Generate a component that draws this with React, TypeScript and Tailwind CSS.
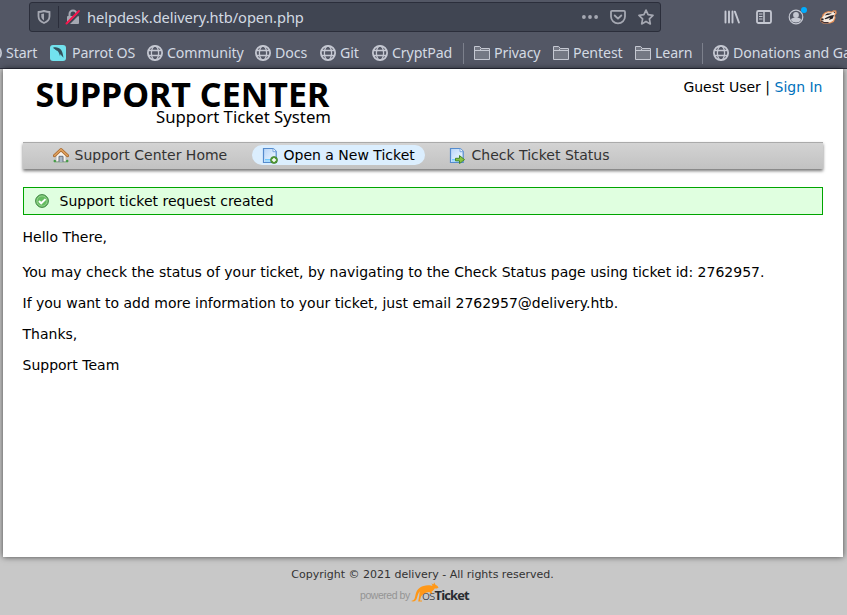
import React from "react";

const chrome = "font-['Noto_Sans','Open_Sans',sans-serif]";

function Globe() {
  return (
    <svg width="16" height="16" viewBox="0 0 16 16" fill="none" stroke="#c5c8d2" strokeWidth="1.3">
      <circle cx="8" cy="8" r="7.1" strokeWidth="1.8" />
      <ellipse cx="8" cy="8" rx="3.6" ry="7" />
      <path d="M1.5 5.5h13M1.5 10.5h13" />
    </svg>
  );
}

function Folder() {
  return (
    <svg width="16" height="16" viewBox="0 0 16 16" fill="#747884" stroke="#c5c8d2" strokeWidth="1">
      <path d="M.5 14.5v-13h5.2l1.600 2h8.200v11z" />
      <path d="M.5 5.500h5.200l1.600-2" fill="none" />
      <path d="M1 5.500h14.500" fill="none" />
    </svg>
  );
}

function Parrot() {
  return (
    <svg width="16" height="16" viewBox="0 0 16 16">
      <rect width="16" height="16" rx="3" fill="#72e2ee" />
      <path d="M3 2.800C5.500 1.800 9.200 2.500 11.200 5c1.500 2 1.600 4.800 2.300 7.800-1.300-1.500-2.400-2.400-3.100-3.800l-.4 2.200C9.300 8.500 8.600 6.600 7 5.500l-.5.500-.3-1.200-1 .3V4.200c-.8-.2-1.500-.7-2.200-1.400z" fill="#33515c" />
    </svg>
  );
}

function Bookmark({ icon, label, width }: { icon: React.ReactNode; label: string; width: string }) {
  return (
    <div className={`flex shrink-0 items-center ${width}`}>
      <span className="mr-1 shrink-0">{icon}</span>
      <span className="whitespace-nowrap">{label}</span>
    </div>
  );
}

function AddressBar() {
  return (
    <div className="ml-[29px] flex h-[30px] w-[632px] shrink-0 items-center rounded-[3px] border border-[#2b2e3b] bg-[#404552]">
      <svg className="ml-[7px]" width="14" height="14" viewBox="0 0 14 14" fill="none">
        <path d="M7 1C5.300 1.400 3.500 1.800 1.500 2v4.200c0 3.200 1.900 5.400 5.500 6.800 3.600-1.400 5.500-3.600 5.500-6.800V2C10.500 1.800 8.700 1.400 7 1z" stroke="#a5a8b2" strokeWidth="1.800" />
        <path d="M7 3.600v6.800C5 9.300 4.300 8 4.300 6.200V4.100z" fill="#a5a8b2" />
      </svg>
      <div className="ml-[7px] h-[22px] w-px bg-[#2b2e3b]" />
      <svg className="ml-[6px]" width="16" height="16" viewBox="0 0 16 16" fill="none">
        <path d="M4.500 8V5a3.500 3.500 0 0 1 7 0v3" stroke="#a5a8b2" strokeWidth="2" />
        <rect x="2" y="7" width="12" height="8" rx="1" fill="#a5a8b2" />
        <path d="M2.800 15.800L15.300 3.300" stroke="#404552" strokeWidth="2" />
        <path d="M1.500 14.500L14 2" stroke="#f5154b" strokeWidth="2" strokeLinecap="round" />
      </svg>
      <span className="ml-[6px] w-[490px] whitespace-nowrap text-[14.67px] leading-[20px] tracking-[-0.06px] text-[#d3dae3]">
        helpdesk.delivery.htb/open.php
      </span>
      <svg className="ml-[5px] shrink-0" width="16" height="16" viewBox="0 0 16 16" fill="#a5a8b2">
        <circle cx="1.900" cy="8" r="1.900" />
        <circle cx="8" cy="8" r="1.900" />
        <circle cx="14.100" cy="8" r="1.900" />
      </svg>
      <svg className="ml-[12px] shrink-0" width="16" height="16" viewBox="0 0 16 16" fill="none" stroke="#a5a8b2" strokeWidth="1.800" strokeLinecap="round" strokeLinejoin="round">
        <path d="M2 1.900h12a1 1 0 0 1 1 1V7.500a7 6.800 0 0 1-14 0V2.900a1 1 0 0 1 1-1z" />
        <path d="M4.700 6.500L8 9.700l3.300-3.200" />
      </svg>
      <svg className="ml-[12px] shrink-0" width="16" height="16" viewBox="0 0 16 16" fill="none" stroke="#a5a8b2" strokeWidth="1.700" strokeLinejoin="round">
        <path d="M8 1.100l2.100 4.600 4.900.7-3.600 3.500.9 5L8 12.400l-4.300 2.500.9-5L1 6.400l4.900-.7z" />
      </svg>
    </div>
  );
}

function ToolbarIcons() {
  return (
    <div className="ml-[63px] flex h-[30px] shrink-0 items-center gap-4">
      <svg width="16" height="16" viewBox="0 0 16 16" stroke="#c5c8d2" strokeWidth="1.900" strokeLinecap="round">
        <path d="M1.500 2.500v11M5 2.500v11M8.500 2.500v11M10.900 2.700l4 10.800" />
      </svg>
      <svg width="16" height="16" viewBox="0 0 16 16" fill="none" stroke="#c5c8d2">
        <rect x="1" y="2" width="14" height="12" rx="1.500" strokeWidth="1.800" />
        <path d="M8 2v12" strokeWidth="1.500" />
        <path d="M3 5h3.500M3 7.500h3.500M3 10h3.500" />
      </svg>
      <svg width="16" height="20" viewBox="0 -2 16 20" className="overflow-visible">
        <circle cx="8" cy="8" r="6.800" fill="none" stroke="#c5c8d2" strokeWidth="1.200" />
        <circle cx="8" cy="6" r="2.900" fill="#c5c8d2" />
        <path d="M3 11c0-2 2-2.300 5-2.300s5 .3 5 2.300c-1.200 1.800-3 2.500-5 2.500S4.200 12.800 3 11z" fill="#c5c8d2" />
        <circle cx="16" cy="1" r="3" fill="#00adff" />
      </svg>
      <svg width="17" height="16" viewBox="0 0 17 16">
        <path d="M.5 12.500L.3 9.500 2 8l.5-2.500L5 3.200 8.500 2l3 .5 2-1.300 2.800.2.400 2.800L15 6.500l.6 2.500-1.800 4L10 14.500H3z" fill="#e58e54" />
        <path d="M1.500 11.500L2 9l1.500-2L5 4.500 8 3.300l4 .2 2.800-1.500.5 2-1.300 2.500.6 2.200-1.500 3L10 13.500H4z" fill="#f6ebe0" />
        <path d="M4.500 6.500l2.500-2 5-.2-3 1.500zM4.500 9.500C7 8.500 9.500 6.500 14 6l-1.200 3.500L9 11l1-2.200-4.500 1.500zM.8 9.800l2.400-.5.6 1.700-2 .5z" fill="#272226" />
        <path d="M1 12l3 1.500h4.500M13.800 2.500l1 1.500" fill="none" stroke="#403034" strokeWidth="1.100" />
      </svg>
    </div>
  );
}

function BrowserChrome() {
  return (
    <header className={`h-[69px] overflow-hidden border-b border-[#2f3240] bg-[#535765] ${chrome}`}>
      <div className="flex pt-[2px]">
        <AddressBar />
        <ToolbarIcons />
      </div>
      <nav className="-ml-[14px] mt-[9px] flex h-6 items-center text-[14.2px] leading-[22px] tracking-[-0.12px] text-[#d3dae3]">
        <Bookmark icon={<Globe />} label="Start" width="w-[64px]" />
        <div className="flex w-[97px] shrink-0 items-center gap-[6px]">
          <Parrot />
          <span className="whitespace-nowrap">Parrot OS</span>
        </div>
        <Bookmark icon={<Globe />} label="Community" width="w-[108px]" />
        <Bookmark icon={<Globe />} label="Docs" width="w-[65px]" />
        <Bookmark icon={<Globe />} label="Git" width="w-[52px]" />
        <Bookmark icon={<Globe />} label="CryptPad" width="w-[91px]" />
        <div className="mr-[10px] h-[21px] w-px shrink-0 bg-[#7c808c]" />
        <Bookmark icon={<Folder />} label="Privacy" width="w-[79px]" />
        <Bookmark icon={<Folder />} label="Pentest" width="w-[82px]" />
        <Bookmark icon={<Folder />} label="Learn" width="w-[67px]" />
        <div className="mr-[10px] h-[21px] w-px shrink-0 bg-[#7c808c]" />
        <Bookmark icon={<Globe />} label="Donations and Ga" width="w-[134px]" />
      </nav>
    </header>
  );
}

function House() {
  return (
    <svg width="16" height="16" viewBox="0 0 16 16">
      <path d="M1 13.500h14v1.800H1z" fill="#5ca65a" />
      <path d="M3 8l5-5 5 5v6.500H3z" fill="#f5f3ef" stroke="#aaa" strokeWidth=".7" />
      <path d="M1.500 8.700L8 2.600l6.500 6.100" fill="none" stroke="#a8672b" strokeWidth="3" strokeLinecap="round" strokeLinejoin="round" />
      <path d="M1.600 8.500L8 2.500l6.400 6" fill="none" stroke="#e0a361" strokeWidth="1.600" strokeLinecap="round" strokeLinejoin="round" />
      <path d="M6 15V9.300h4V15" fill="#a9b6c5" stroke="#66717e" />
      <path d="M.8 13c1.300-.8 2.200.4 2.500 1.800H.5zM15.200 13c-1.300-.8-2.200.4-2.500 1.800h2.800z" fill="#409b43" />
    </svg>
  );
}

function Page({ children }: { children: React.ReactNode }) {
  return (
    <svg width="16" height="17" viewBox="0 0 16 17">
      <defs>
        <linearGradient id="paper" x2="1" y2="1">
          <stop stopColor="#b7d5f8" />
          <stop offset="1" stopColor="#f5fbff" />
        </linearGradient>
      </defs>
      <path d="M1.500 1.500h9.700l3 3v11H1.500z" fill="url(#paper)" stroke="#558bcd" strokeWidth="1.200" />
      <path d="M11 1.500v3.200h3.200" fill="#fff" stroke="#77a4dd" />
      <path d="M3 12.500h7M3 14h7" stroke="#70caff" />
      {children}
    </svg>
  );
}

function TicketNav() {
  return (
    <nav className="flex h-[27px] items-center border-t border-[#aaa] bg-linear-to-b from-[#d3d3d3] to-[#c2c2c2] pb-[2px] text-[14px] leading-5 text-[#333] shadow-[0_2px_3px_rgba(0,0,0,0.55)]">
      <div className="ml-[30px] flex w-[199px] shrink-0 items-center gap-[5.5px]">
        <House />
        <span className="whitespace-nowrap">Support Center Home</span>
      </div>
      <div className="flex h-5 w-[173px] shrink-0 items-center gap-[5.500px] rounded-full bg-[#dbeefe] pl-[10px] text-black">
        <Page>
          <circle cx="12" cy="13" r="3.500" fill="#529b35" stroke="#417d2b" strokeWidth=".7" />
          <path d="M12 10.900v4.200M9.900 13h4.200" stroke="#fff" strokeWidth="1.500" />
        </Page>
        <span className="whitespace-nowrap">Open a New Ticket</span>
      </div>
      <div className="ml-[24px] flex items-center gap-[6.5px]">
        <Page>
          <path d="M6.500 11.300h4V8.600l5 4-5 4v-2.800h-4z" fill="#8bc53f" stroke="#44872d" />
        </Page>
        <span className="whitespace-nowrap">Check Ticket Status</span>
      </div>
    </nav>
  );
}

function OkIcon() {
  return (
    <svg width="14" height="14" viewBox="0 0 14 14">
      <circle cx="7" cy="7" r="6.400" fill="#5eb55a" stroke="#438846" />
      <circle cx="7" cy="7" r="5.100" fill="#65bc60" stroke="#a7dba0" strokeWidth=".8" />
      <path d="M4 7l2.200 2.300 4.300-4.200" fill="none" stroke="#fff" strokeWidth="2" />
    </svg>
  );
}

function Kangaroo() {
  return (
    <svg width="28" height="21" viewBox="0 0 28 21">
      <path d="M.5 18.700c2.700.2 3.300-2 3.900-5.200C5.300 8.500 8 5.200 12.500 4c3-.8 5.600-.9 8-.2l1.200-.6-1.500-1.700 2.500.7.300-2 1.500 2.500 2 1.300 1 1.700-1.700.8h-2.200c-1 1.700-2 2.600-3.200 3.200l1.200 2.300-1.200.2-2.100-2.200c-2 .3-3.500.5-4.700 1.500-1.600 1.200-3 2-3.700 3.400l-.9 3.600H11v.9H7.200l1-5.400.5-4.800c-1 1.600-2 4-2.600 6.200-.8 3-2.400 4.500-5.600 3.900z" fill="#ff9818" />
    </svg>
  );
}

function Footer() {
  return (
    <footer className="flex flex-col items-center pr-[2px] pt-[10px]">
      <p className="whitespace-nowrap text-[11px] leading-4 text-[#333]">Copyright © 2021 delivery - All rights reserved.</p>
      <div className="-mt-px mr-[14px] flex h-[22px] w-[111px] items-start whitespace-nowrap">
        <span className="w-[51px] shrink-0 pt-[5px] font-['Liberation_Sans',sans-serif] text-[10.5px] leading-4 tracking-[-0.45px] text-[#949494]">powered by</span>
        <span className="w-[11px] shrink-0"><Kangaroo /></span>
        <span className="relative flex pt-[5px] font-['Open_Sans',sans-serif] text-[13.500px] leading-4 tracking-[-0.8px] text-[#272b30]">
          <span className="w-[12.5px] font-light">os</span><span className="text-[13px] font-bold tracking-[-0.9px]">Ticket</span>
        </span>
      </div>
    </footer>
  );
}

export default function App() {
  return (
    <div className="h-[615px] w-[847px] overflow-hidden bg-[#c8c8c8] font-['DejaVu_Sans',sans-serif]">
      <BrowserChrome />
      <main className="ml-[3px] h-[488px] w-[840px] bg-white px-5 text-[14px] text-black shadow-[0_0_6px_rgba(0,0,0,0.65)]">
        <div className="flex h-[73px] justify-between">
          <div className="ml-[12.5px] w-[296px] shrink-0 whitespace-nowrap font-['Noto_Sans','Open_Sans',sans-serif]">
            <div className="pt-[9px] text-[34px] font-bold leading-[32px]">SUPPORT CENTER</div>
            <div className="-mt-[2px] pr-[0.5px] text-right text-[16.75px] leading-[18px]">Support Ticket System</div>
          </div>
          <div className="mr-[0.5px] whitespace-nowrap pt-[8px] leading-5">
            Guest User | <a className="text-[#0072bc]">Sign In</a>
          </div>
        </div>
        <TicketNav />
        <div className="mt-[18px] flex h-7 items-center gap-[10.5px] border border-[#00a500] bg-[#e0ffe0] pl-[11px]">
          <OkIcon />
          <span>Support ticket request created</span>
        </div>
        <article className="-ml-[0.5px] leading-[17px]">
          <p className="mt-[14px]">Hello There,</p>
          <p className="mt-[18px] whitespace-nowrap">You may check the status of your ticket, by navigating to the Check Status page using ticket id: 2762957.</p>
          <p className="mt-[14px]">If you want to add more information to your ticket, just email 2762957@delivery.htb.</p>
          <p className="mt-[14px]">Thanks,</p>
          <p className="mt-[14px]">Support Team</p>
        </article>
      </main>
      <Footer />
    </div>
  );
}
